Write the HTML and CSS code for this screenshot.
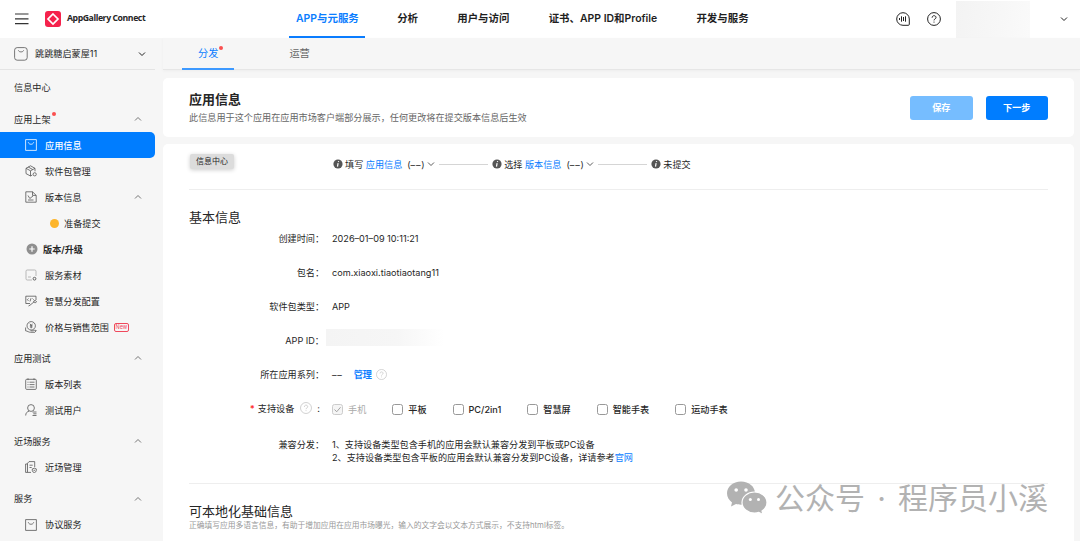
FILE: index.html
```html
<!DOCTYPE html>
<html lang="zh-CN">
<head>
  <meta charset="UTF-8">
  <meta name="viewport" content="width=device-width, initial-scale=1.0">
  <title>AppGallery Connect</title>
  <link rel="stylesheet" href="styles.css">
</head>
<body>
  <!-- shared icons -->
  <svg class="sprite">
    <symbol id="down" viewBox="0 0 8 8"><path d="M1 2.5 4 5.5 7 2.5"/></symbol>
    <symbol id="up" viewBox="0 0 8 8"><path d="M1 5.5 4 2.5 7 5.5"/></symbol>
    <symbol id="bag" viewBox="0 0 12 12"><path d="M.6.6h10.8v10.8H.6zM3.3 3.3c.5 2.6 4.9 2.6 5.4 0"/></symbol>
    <symbol id="help" viewBox="0 0 14 14"><circle cx="7" cy="7" r="6.4"/><path d="M5.1 5.7C5.1 3 9 3.1 9 5.5 9 7 7 6.9 7 8.4M7 9.6v1"/></symbol>
    <symbol id="info" viewBox="0 0 10 10"><circle cx="5" cy="5" r="4.6" fill="#555" stroke="none"/><path d="M5.6 2.1 5.4 3M5.1 4.1 4.5 7.7" stroke="#fff" stroke-width="1.2"/></symbol>
  </svg>

  <header class="header">
    <div class="brand">
      <svg class="menu-icon" viewBox="0 0 14 12"><path d="M0 1h13.5M0 5.8h13.5M0 10.6h13.5"/></svg>
      <svg class="logo" viewBox="0 0 16 16">
        <rect width="16" height="16" rx="3" fill="#f5224c"/>
        <path d="M8 3 13 8 8 13 3 8z" fill="none" stroke="#fff" stroke-width="1.7"/>
      </svg>
      <span class="brand-name">AppGallery Connect</span>
    </div>
    <nav class="main-nav">
      <a class="nav-item active">APP与元服务</a>
      <a class="nav-item">分析</a>
      <a class="nav-item">用户与访问</a>
      <a class="nav-item">证书、APP ID和Profile</a>
      <a class="nav-item">开发与服务</a>
    </nav>
    <div class="tools">
      <svg class="tool-icon" viewBox="0 0 14 14"><path d="M13.3 7v5.3q0 1-1 1H7A6.3 6.3 0 1 1 13.3 7zM3.500 6v2M5.500 4.300v5.400M7.500 5v4M9.500 4.300v5.400"/></svg>
      <svg class="tool-icon"><use href="#help"/></svg>
      <div class="account"></div>
      <svg class="arrow dark"><use href="#down"/></svg>
    </div>
  </header>

  <div class="layout">
    <aside class="sidebar">
      <div class="app-switch">
        <svg class="app-icon" viewBox="0 0 14 14"><rect x=".6" y=".6" width="12.6" height="12.6" rx="2.6"/><path d="M4.4 3.4c.5 2 4.7 2 5.2 0"/></svg>
        <span>跳跳糖启蒙屋11</span>
        <svg class="arrow dark"><use href="#down"/></svg>
      </div>
      <div class="side-link">信息中心</div>

      <div class="group"><span class="dot-label">应用上架</span><svg class="arrow"><use href="#up"/></svg></div>
      <div class="item active"><svg class="icon"><use href="#bag"/></svg>应用信息</div>
      <div class="item">
        <svg class="icon" viewBox="0 0 12 12"><path d="M7.3 10 5.5 11 1 8.6V3.3L5.5.8 10 3.3v3M1 3.3l4.5 2.5L10 3.3M5.5 5.8V11M3.2 2l4.5 2.5"/><circle cx="9.7" cy="9.3" r="1.6"/></svg>软件包管理
      </div>
      <div class="item">
        <svg class="icon" viewBox="0 0 12 12"><path d="M7.5.8H.8v10.4h10.4V4.4zM7.5.8v3.6h3.7M3 4.5l1.8 3L8 5M3 9h5.5"/></svg>版本信息
        <svg class="arrow"><use href="#up"/></svg>
      </div>
      <div class="item sub"><i class="status"></i>准备提交</div>
      <div class="item add">
        <svg class="icon" viewBox="0 0 12 12"><circle cx="6" cy="6" r="5.5" fill="#8f8f8f" stroke="none"/><path d="M6 3.3v5.4M3.3 6h5.4" stroke="#fff" stroke-width="1.2"/></svg>版本/升级
      </div>
      <div class="item">
        <svg class="icon faint" viewBox="0 0 12 12"><path d="M7 11H2.2Q1 11 1 9.8V2.2Q1 1 2.2 1h7.6Q11 1 11 2.2V7M3 8h3"/><circle cx="9.5" cy="9.7" r="1.4" stroke="#444"/></svg>服务素材
      </div>
      <div class="item">
        <svg class="icon" viewBox="0 0 12 12"><path d="M11 5V1.2H.8V8.500H5M3.500 3.500 2.300 4.700l1.200 1.200M7.500 3.500l1.200 1.200M6 3.200 5 6.500M3.500 11l1.500-.8 4.300-3.500M8.500 6.300l1.500-1 1.500 1.200-1.200 1.600z"/></svg>智慧分发配置
      </div>
      <div class="item">
        <svg class="icon" viewBox="0 0 12 12"><circle cx="6.2" cy="4.8" r="4.2"/><path d="M4.800 2.700l1.400 1.600 1.400-1.600M6.200 4.300v3M4.900 4.700h2.600M4.900 6h2.600M.6 6.500v3.300c2 .2 3 1.500 5 1.500h4.200l1.500-1.700-1.500-.4-1.600.6H5.500"/></svg>价格与销售范围
        <span class="new">New</span>
      </div>

      <div class="group"><span>应用测试</span><svg class="arrow"><use href="#up"/></svg></div>
      <div class="item">
        <svg class="icon" viewBox="0 0 12 12"><rect x=".7" y="1.3" width="10.6" height="10.1" rx="1"/><path d="M3 .3v1.800M9 .3v1.800M2.500 4.200h1M4.500 4.200h5M2.500 6.600h1M4.500 6.600h5M2.500 9h1M4.500 9h5"/></svg>版本列表
      </div>
      <div class="item">
        <svg class="icon" viewBox="0 0 12 12"><circle cx="6" cy="4" r="3.4"/><path d="M.7 11.500c0-2.500 1.300-3.800 3.500-4.400M7.500 8h4M8.300 9.800h3.200M7.500 11.500h4"/></svg>测试用户
      </div>

      <div class="group"><span>近场服务</span><svg class="arrow"><use href="#up"/></svg></div>
      <div class="item">
        <svg class="icon" viewBox="0 0 12 12"><path d="M6 11.400H2.500V2.300L4 .6h5.700v5.500M2.500 3H.6v8.400h2M4.500 4.200h3.200M4.500 6.500h2.200"/><path d="M9.300 7.200l2 .7v1.600q0 1.500-2 2.200-2-.7-2-2.200V7.900zM8.500 9.300h1.600"/></svg>近场管理
      </div>

      <div class="group"><span>服务</span><svg class="arrow"><use href="#up"/></svg></div>
      <div class="item"><svg class="icon"><use href="#bag"/></svg>协议服务</div>
    </aside>

    <main class="content">
      <nav class="tabs">
        <a class="tab active"><span class="dot-label">分发</span></a>
        <a class="tab">运营</a>
      </nav>

      <section class="card title-card">
        <div class="title-text">
          <h1>应用信息</h1>
          <p>此信息用于这个应用在应用市场客户端部分展示，任何更改将在提交版本信息后生效</p>
        </div>
        <button class="btn disabled">保存</button>
        <button class="btn">下一步</button>
      </section>

      <section class="card detail-card">
        <div class="progress">
          <span class="tag">信息中心</span>
          <div class="steps">
            <svg class="info"><use href="#info"/></svg><span>填写</span><a>应用信息</a><span class="count">(<span class="dashes">––</span>)</span><svg class="arrow"><use href="#down"/></svg>
            <i class="line"></i>
            <svg class="info"><use href="#info"/></svg><span>选择</span><a>版本信息</a><span class="count">(<span class="dashes">––</span>)</span><svg class="arrow"><use href="#down"/></svg>
            <i class="line"></i>
            <svg class="info"><use href="#info"/></svg><span>未提交</span>
          </div>
        </div>

        <h2>基本信息</h2>
        <div class="form">
          <div class="row"><div class="label">创建时间：</div><div class="value">2026–01–09 10:11:21</div></div>
          <div class="row"><div class="label">包名：</div><div class="value">com.xiaoxi.tiaotiaotang11</div></div>
          <div class="row"><div class="label">软件包类型：</div><div class="value">APP</div></div>
          <div class="row"><div class="label">APP ID：</div><div class="hidden-id"></div></div>
          <div class="row"><div class="label">所在应用系列：</div><div class="value"><span class="dashes">––</span><a class="manage">管理</a><svg class="hint"><use href="#help"/></svg></div></div>
          <div class="row devices">
            <div class="label"><b class="required">*</b>支持设备<svg class="hint"><use href="#help"/></svg><span class="colon">:</span></div>
            <div class="value checks">
              <span class="check off"><i class="box"><svg viewBox="0 0 8 8"><path d="M1.300 4l2 2 3.400-4"/></svg></i>手机</span>
              <span class="check"><i class="box"></i>平板</span>
              <span class="check"><i class="box"></i>PC/2in1</span>
              <span class="check"><i class="box"></i>智慧屏</span>
              <span class="check"><i class="box"></i>智能手表</span>
              <span class="check"><i class="box"></i>运动手表</span>
            </div>
          </div>
          <div class="row compat">
            <div class="label">兼容分发：</div>
            <div class="value">
              <p>1、支持设备类型包含手机的应用会默认兼容分发到平板或PC设备</p>
              <p>2、支持设备类型包含平板的应用会默认兼容分发到PC设备，详请参考<a>官网</a></p>
            </div>
          </div>
        </div>

        <div class="local">
          <h2>可本地化基础信息</h2>
          <p>正确填写应用多语言信息，有助于增加应用在应用市场曝光，输入的文字会以文本方式展示，不支持html标签。</p>
        </div>
      </section>
    </main>
  </div>

  <div class="watermark">
    <svg viewBox="0 0 41 34">
      <path d="M15 .5C7 .5 1 5.700 1 12.300c0 3.700 2 7 5 9.100L5 25.500l5-2.400c1.600.4 3 .6 5 .6 8 0 14-4.700 14-11.400S23 .5 15 .5z" fill="#b2b2b2"/>
      <path d="M28.500 11C21.600 11 16 15.800 16 21.500S21.600 32 28.500 32c1.500 0 3-.2 4.300-.6L37 33.500l-1-3.600c3-2 5-5 5-8.400C41 15.800 35.400 11 28.500 11z" fill="#b2b2b2" stroke="#fff" stroke-width="1.2"/>
      <g fill="#fff"><circle cx="10.2" cy="9" r="1.8"/><circle cx="20" cy="9" r="1.8"/><circle cx="24.3" cy="18.6" r="1.5"/><circle cx="32.5" cy="18.6" r="1.5"/></g>
    </svg>
    <span>公众号</span><span class="sep">·</span><span>程序员小溪</span>
  </div>
</body>
</html>
```
FILE: styles.css
```css
* {
  box-sizing: border-box;
}

body {
  margin: 0;
  height: 541px;
  overflow: hidden;
  background: #f6f6f6;
  color: #262626;
  font: 9.15px/13px Inter, "Noto Sans CJK SC", sans-serif;
  white-space: nowrap;
}

h1, h2, p {
  margin: 0;
}

a {
  color: #0a7dff;
}

svg {
  flex: none;
  fill: none;
  stroke: #555;
  stroke-width: 0.8;
}

.sprite {
  position: absolute;
  width: 0;
  height: 0;
}

.arrow {
  width: 8px;
  height: 8px;
}

.arrow.dark {
  stroke: #222;
  stroke-width: 1;
}

/* header */
.header {
  display: flex;
  height: 38px;
  background: #fff;
}

.brand {
  display: flex;
  align-items: center;
  width: 289px;
  padding-left: 15px;
}

.menu-icon {
  width: 14px;
  height: 12px;
  stroke: #333;
  stroke-width: 1.2;
}

.logo {
  width: 16px;
  height: 16px;
  margin: 0 6px 0 16px;
  stroke: none;
}

.brand-name {
  padding-bottom: 2px;
  font: 700 8.7px "Open Sans", sans-serif;
  letter-spacing: -0.42px;
}

.main-nav {
  display: flex;
  gap: 25.2px;
}

.nav-item {
  padding: 0 7px;
  color: #1f1f1f;
  font-size: 10.45px;
  font-weight: 600;
  line-height: 37px;
}

.nav-item.active {
  width: 76px;
  color: #0a7dff;
  border-bottom: 2px solid #0a7dff;
}

.tools {
  display: flex;
  align-items: center;
  margin-left: auto;
  padding-right: 12px;
}

.tool-icon {
  width: 14px;
  height: 14px;
  margin-right: 17px;
  stroke: #222;
  stroke-width: 1;
}

.account {
  width: 74px;
  height: 37px;
  margin: 1px 30px 0 -2px;
  background: linear-gradient(100deg, #f3f3f3, #f7f7f7 60%, #fafafa);
}

/* sidebar */
.layout {
  display: flex;
  height: 503px;
}

.sidebar {
  width: 155px;
  margin-right: 8px;
  overflow: hidden;
}

.app-switch {
  display: flex;
  align-items: center;
  height: 32px;
  padding: 0 9px 0 14px;
  border-bottom: 1px solid #e4e4e4;
}

.app-icon {
  width: 14px;
  height: 14px;
  margin-right: 7px;
}

.app-switch .arrow,
.item .arrow,
.group .arrow {
  margin-left: auto;
}

.side-link {
  height: 31px;
  padding: 11px 0 0 14px;
}

.group {
  display: flex;
  align-items: center;
  height: 31px;
  padding: 5px 13px 0 14px;
}

.item {
  display: flex;
  align-items: center;
  height: 26.05px;
  padding: 0 13px 0 25px;
}

.item .icon {
  width: 12px;
  height: 12px;
  margin-right: 8px;
}

.item .faint {
  stroke: #aaa;
}

.item.active {
  background: #007dff;
  border-radius: 0 5px 5px 0;
  color: #fff;
  font-weight: 500;
}

.item.active .icon {
  stroke: #fff;
}

.item.sub {
  padding-left: 50px;
}

.item.add {
  padding-left: 26px;
  font-weight: 600;
}

.item.add .icon {
  margin-right: 5px;
}

.status {
  width: 9px;
  height: 9px;
  margin-right: 5px;
  border-radius: 50%;
  background: #fdb52b;
}

.new {
  margin-left: 5px;
  width: 15px;
  height: 9px;
  border: 1px solid #f0485c;
  border-radius: 2px;
  color: #f0485c;
  font-size: 5.5px;
  line-height: 7px;
  text-align: center;
}

.dot-label {
  position: relative;
}

.dot-label::after {
  content: "";
  position: absolute;
  top: -1px;
  right: -5px;
  width: 4px;
  height: 4px;
  border-radius: 50%;
  background: #fa5050;
}

/* content */
.content {
  display: flex;
  flex-direction: column;
  width: 911px;
}

.tabs {
  display: flex;
  gap: 39px;
  height: 32px;
  margin-right: -6px;
  padding-left: 19px;
  border-bottom: 1px solid #e6e6e6;
  box-shadow: 0 1px 3px rgba(0, 0, 0, 0.04);
}

.tab {
  height: 32px;
  padding: 0 16px;
  color: #666;
  font-size: 10.2px;
  line-height: 31px;
}

.tab.active {
  color: #0a7dff;
  border-bottom: 2px solid #3d99ff;
}

.card {
  padding: 0 26px;
  background: #fff;
  border-radius: 5px;
}

.title-card {
  display: flex;
  align-items: center;
  gap: 13px;
  height: 59px;
  margin: 8px 0 7px;
}

.title-text {
  margin-right: auto;
}

h1 {
  margin-top: -1px;
  font-size: 13px;
  font-weight: 600;
  line-height: 20px;
}

.title-text p {
  color: #666;
  line-height: 17px;
}

.btn {
  width: 62.5px;
  height: 24px;
  padding: 0 0 1px;
  border: 0;
  border-radius: 3px;
  background: #007dff;
  color: #fff;
  font: inherit;
  font-weight: 600;
}

.btn.disabled {
  background: #76bdff;
}

.detail-card {
  flex: 1;
  border-radius: 5px 5px 0 0;
}

.progress {
  display: flex;
  height: 46px;
  border-bottom: 1px solid #eee;
}

.tag {
  width: 44px;
  height: 15px;
  margin: 10px 98.5px 0 1px;
  border-radius: 2px;
  background: #dcdcdc;
  box-shadow: 0 1px 4px rgba(0, 0, 0, 0.2);
  font-size: 8px;
  line-height: 14px;
  text-align: center;
}

.steps {
  display: flex;
  align-items: center;
  height: 40px;
}

.info {
  width: 10px;
  height: 10px;
  margin-right: 2.5px;
}

.steps a {
  margin-left: 2.5px;
}

.count {
  margin: 0 2.5px 0 5px;
}

.steps .arrow {
  stroke: #333;
}

.dashes {
  letter-spacing: 0.8px;
}

.line {
  width: 48.5px;
  height: 1px;
  margin: 0 4px;
  background: #d5d5d5;
}

h2 {
  font-size: 13px;
  font-weight: 400;
  line-height: 20px;
}

.detail-card > h2 {
  margin-top: 17px;
}

.form {
  margin-top: -6px;
  padding-bottom: 19px;
  border-bottom: 1px solid #eee;
}

.row {
  display: flex;
  align-items: center;
  height: 34px;
}

.label {
  display: flex;
  align-items: center;
  justify-content: flex-end;
  width: 135px;
  margin-right: 8px;
}

.value {
  display: flex;
  align-items: center;
}

.hidden-id {
  width: 118px;
  height: 17px;
  margin: -6px 0 0 -6px;
  background: linear-gradient(90deg, #f4f4f4, #f6f6f6 60%, #fff);
}

.manage {
  margin-left: 11px;
  font-weight: 600;
}

.hint {
  width: 11px;
  height: 11px;
  margin-left: 4px;
  stroke: #bbb;
}

.required {
  margin-right: 3px;
  color: #f33;
}

.devices {
  height: 36px;
}

.devices .label {
  padding-bottom: 2px;
}

.devices .hint {
  width: 12px;
  height: 12px;
  margin-left: 6px;
}

.colon {
  margin: 0 4px 0 5px;
}

.checks {
  gap: 26px;
  font-weight: 500;
}

.check {
  display: flex;
  align-items: center;
}

.box {
  width: 11px;
  height: 11px;
  margin-right: 5px;
  border: 1px solid #999;
  border-radius: 2.5px;
}

.box svg {
  display: block;
  width: 9px;
  height: 9px;
  stroke: #999;
}

.check.off {
  color: #aaa;
  font-weight: 400;
}

.off .box {
  border-color: #ccc;
  background: #f5f5f5;
}

.compat {
  align-items: flex-start;
  height: 37px;
  padding-top: 11px;
}

.compat .value {
  display: block;
}

.local {
  padding-top: 17px;
}

.local p {
  margin-top: -1px;
  color: #999;
  font-size: 7.75px;
  line-height: 10px;
}

/* watermark over the page */
.watermark {
  position: absolute;
  top: 481px;
  left: 726px;
  display: flex;
  align-items: center;
  height: 34px;
  color: #b2b2b2;
  font-size: 30px;
}

.watermark svg {
  width: 41px;
  height: 34px;
  margin-right: 8px;
  stroke: none;
}

.sep {
  width: 33px;
  text-align: center;
}
```
